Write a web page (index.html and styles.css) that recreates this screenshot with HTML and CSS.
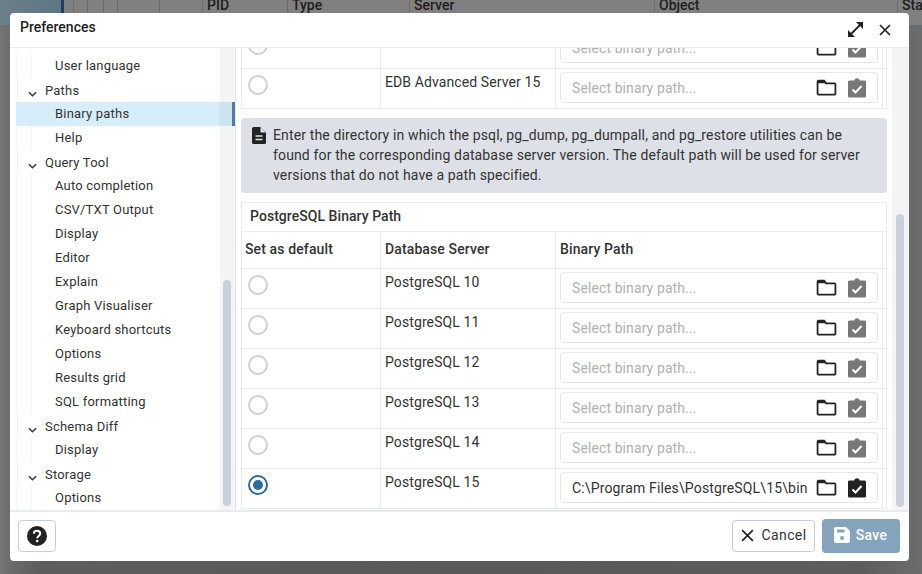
FILE: index.html
```html
<!DOCTYPE html>
<html lang="en">
<head>
<meta charset="utf-8">
<title>Preferences</title>
<link rel="stylesheet" href="styles.css">
</head>
<body>
<div class="backdrop">
  <div class="bg-side"></div>
  <div class="bg-head">
    <div class="bg-col w1"></div><div class="bg-col w2"></div><div class="bg-col w3"></div><div class="bg-col w4"></div><div class="bg-col w4b"></div><div class="bg-col w4c"></div>
    <div class="bg-col w5">PID</div><div class="bg-col w6">Type</div><div class="bg-col w7">Server</div><div class="bg-col w8">Object</div><div class="bg-col w9">Sta</div>
  </div>
</div>
<div class="dialog">
  <header class="dlg-head">
    <span class="dlg-title">Preferences</span>
    <span class="dlg-tools">
      <svg class="ico-expand" viewBox="0 0 15 15"><path d="M3 12 12 3" fill="none" stroke="#222" stroke-width="1.800"/><path d="M8 0H15V7L12.500 4.500 11 3 9.500 1.500Z M0 8V15H7L4.500 12.500 3 11 1.500 9.500Z" fill="#222"/></svg>
      <svg class="ico-close" viewBox="0 0 14 14"><path d="M2 2 12 12M12 2 2 12" fill="none" stroke="#222" stroke-width="1.700"/></svg>
    </span>
  </header>
  <div class="dlg-body">
    <nav class="tree">
      <div class="tree-list">
        <div class="leaf">User language</div>
        <div class="branch"><svg class="chev" viewBox="0 0 10 6"><path d="M1 1 5 5 9 1" fill="none" stroke="#333" stroke-width="1.600"/></svg>Paths</div>
        <div class="leaf selected">Binary paths</div>
        <div class="leaf">Help</div>
        <div class="branch"><svg class="chev" viewBox="0 0 10 6"><path d="M1 1 5 5 9 1" fill="none" stroke="#333" stroke-width="1.600"/></svg>Query Tool</div>
        <div class="leaf">Auto completion</div>
        <div class="leaf">CSV/TXT Output</div>
        <div class="leaf">Display</div>
        <div class="leaf">Editor</div>
        <div class="leaf">Explain</div>
        <div class="leaf">Graph Visualiser</div>
        <div class="leaf">Keyboard shortcuts</div>
        <div class="leaf">Options</div>
        <div class="leaf">Results grid</div>
        <div class="leaf">SQL formatting</div>
        <div class="branch"><svg class="chev" viewBox="0 0 10 6"><path d="M1 1 5 5 9 1" fill="none" stroke="#333" stroke-width="1.600"/></svg>Schema Diff</div>
        <div class="leaf">Display</div>
        <div class="branch"><svg class="chev" viewBox="0 0 10 6"><path d="M1 1 5 5 9 1" fill="none" stroke="#333" stroke-width="1.600"/></svg>Storage</div>
        <div class="leaf">Options</div>
      </div>
      <div class="tree-scroll"><div class="tree-thumb"></div></div>
    </nav>
    <main class="content">
      <div class="pane">
        <div class="top-table">
          <div class="row"><div class="c1"><span class="radio"></span></div><div class="c2"></div><div class="c3"><div class="path"><span class="ph">Select binary path...</span><svg class="folder" viewBox="0 0 20 16"><path d="M1.500 2.500V14a.8.8 0 0 0 .8.8h15.400a.8.8 0 0 0 .8-.8V4.800a.8.8 0 0 0-.8-.8H9.500L7.800 1.500H2.300a.8.8 0 0 0-.8 1Z" fill="none" stroke="#222" stroke-width="1.700"/><path d="M2 1.500H7.800L9.500 4H2Z" fill="#222"/></svg><svg class="clip" viewBox="0 0 18 20"><path d="M2 2.500H6.300C6.600 1 7.700.3 9 .3S11.400 1 11.700 2.500H16A1.500 1.500 0 0 1 18 4V18A1.500 1.500 0 0 1 16 19.500H2A1.500 1.500 0 0 1 0 18V4A1.500 1.500 0 0 1 2 2.500Z" fill="#777"/><path d="M4.500 11.500 7.500 14.500 13.500 8" fill="none" stroke="#fff" stroke-width="2"/></svg></div></div></div>
          <div class="row"><div class="c1"><span class="radio"></span></div><div class="c2">EDB Advanced Server 15</div><div class="c3"><div class="path"><span class="ph">Select binary path...</span><svg class="folder" viewBox="0 0 20 16"><path d="M1.500 2.500V14a.8.8 0 0 0 .8.8h15.400a.8.8 0 0 0 .8-.8V4.800a.8.8 0 0 0-.8-.8H9.500L7.800 1.500H2.300a.8.8 0 0 0-.8 1Z" fill="none" stroke="#222" stroke-width="1.700"/><path d="M2 1.500H7.800L9.500 4H2Z" fill="#222"/></svg><svg class="clip" viewBox="0 0 18 20"><path d="M2 2.500H6.300C6.600 1 7.700.3 9 .3S11.400 1 11.700 2.500H16A1.500 1.500 0 0 1 18 4V18A1.500 1.500 0 0 1 16 19.500H2A1.500 1.500 0 0 1 0 18V4A1.500 1.500 0 0 1 2 2.500Z" fill="#777"/><path d="M4.500 11.500 7.500 14.500 13.500 8" fill="none" stroke="#fff" stroke-width="2"/></svg></div></div></div>
        </div>
        <div class="note">
          <svg class="note-ico" viewBox="0 0 14 17"><path d="M1.500 0H8.500L14 5.500V15.500A1.500 1.500 0 0 1 12.500 17H1.500A1.500 1.500 0 0 1 0 15.500V1.500A1.500 1.500 0 0 1 1.500 0Z" fill="#222"/><path d="M8.500 0V5.500H14" fill="#dde0e7"/><path d="M3.500 9H10.500M3.500 12.500H10.500" stroke="#dde0e7" stroke-width="1.500"/></svg>
          <p>Enter the directory in which the psql, pg_dump, pg_dumpall, and pg_restore utilities can be found for the corresponding database server version. The default path will be used for server versions that do not have a path specified.</p>
        </div>
        <section class="box">
          <div class="box-title">PostgreSQL Binary Path</div>
          <div class="row head"><div class="c1">Set as default</div><div class="c2">Database Server</div><div class="c3">Binary Path</div></div>
          <div class="row"><div class="c1"><span class="radio"></span></div><div class="c2">PostgreSQL 10</div><div class="c3"><div class="path"><span class="ph">Select binary path...</span><svg class="folder" viewBox="0 0 20 16"><path d="M1.500 2.500V14a.8.8 0 0 0 .8.8h15.400a.8.8 0 0 0 .8-.8V4.800a.8.8 0 0 0-.8-.8H9.500L7.800 1.500H2.300a.8.8 0 0 0-.8 1Z" fill="none" stroke="#222" stroke-width="1.700"/><path d="M2 1.500H7.800L9.500 4H2Z" fill="#222"/></svg><svg class="clip" viewBox="0 0 18 20"><path d="M2 2.500H6.300C6.600 1 7.700.3 9 .3S11.400 1 11.700 2.500H16A1.500 1.500 0 0 1 18 4V18A1.500 1.500 0 0 1 16 19.500H2A1.500 1.500 0 0 1 0 18V4A1.500 1.500 0 0 1 2 2.500Z" fill="#777"/><path d="M4.500 11.500 7.500 14.500 13.500 8" fill="none" stroke="#fff" stroke-width="2"/></svg></div></div></div>
          <div class="row"><div class="c1"><span class="radio"></span></div><div class="c2">PostgreSQL 11</div><div class="c3"><div class="path"><span class="ph">Select binary path...</span><svg class="folder" viewBox="0 0 20 16"><path d="M1.500 2.500V14a.8.8 0 0 0 .8.8h15.400a.8.8 0 0 0 .8-.8V4.800a.8.8 0 0 0-.8-.8H9.500L7.800 1.500H2.300a.8.8 0 0 0-.8 1Z" fill="none" stroke="#222" stroke-width="1.700"/><path d="M2 1.500H7.800L9.500 4H2Z" fill="#222"/></svg><svg class="clip" viewBox="0 0 18 20"><path d="M2 2.500H6.300C6.600 1 7.700.3 9 .3S11.400 1 11.700 2.500H16A1.500 1.500 0 0 1 18 4V18A1.500 1.500 0 0 1 16 19.500H2A1.500 1.500 0 0 1 0 18V4A1.500 1.500 0 0 1 2 2.500Z" fill="#777"/><path d="M4.500 11.500 7.500 14.500 13.500 8" fill="none" stroke="#fff" stroke-width="2"/></svg></div></div></div>
          <div class="row"><div class="c1"><span class="radio"></span></div><div class="c2">PostgreSQL 12</div><div class="c3"><div class="path"><span class="ph">Select binary path...</span><svg class="folder" viewBox="0 0 20 16"><path d="M1.500 2.500V14a.8.8 0 0 0 .8.8h15.400a.8.8 0 0 0 .8-.8V4.800a.8.8 0 0 0-.8-.8H9.500L7.800 1.500H2.300a.8.8 0 0 0-.8 1Z" fill="none" stroke="#222" stroke-width="1.700"/><path d="M2 1.500H7.800L9.500 4H2Z" fill="#222"/></svg><svg class="clip" viewBox="0 0 18 20"><path d="M2 2.500H6.300C6.600 1 7.700.3 9 .3S11.400 1 11.700 2.500H16A1.500 1.500 0 0 1 18 4V18A1.500 1.500 0 0 1 16 19.500H2A1.500 1.500 0 0 1 0 18V4A1.500 1.500 0 0 1 2 2.500Z" fill="#777"/><path d="M4.500 11.500 7.500 14.500 13.500 8" fill="none" stroke="#fff" stroke-width="2"/></svg></div></div></div>
          <div class="row"><div class="c1"><span class="radio"></span></div><div class="c2">PostgreSQL 13</div><div class="c3"><div class="path"><span class="ph">Select binary path...</span><svg class="folder" viewBox="0 0 20 16"><path d="M1.500 2.500V14a.8.8 0 0 0 .8.8h15.400a.8.8 0 0 0 .8-.8V4.800a.8.8 0 0 0-.8-.8H9.500L7.800 1.500H2.300a.8.8 0 0 0-.8 1Z" fill="none" stroke="#222" stroke-width="1.700"/><path d="M2 1.500H7.800L9.500 4H2Z" fill="#222"/></svg><svg class="clip" viewBox="0 0 18 20"><path d="M2 2.500H6.300C6.600 1 7.700.3 9 .3S11.400 1 11.700 2.500H16A1.500 1.500 0 0 1 18 4V18A1.500 1.500 0 0 1 16 19.500H2A1.500 1.500 0 0 1 0 18V4A1.500 1.500 0 0 1 2 2.500Z" fill="#777"/><path d="M4.500 11.500 7.500 14.500 13.500 8" fill="none" stroke="#fff" stroke-width="2"/></svg></div></div></div>
          <div class="row"><div class="c1"><span class="radio"></span></div><div class="c2">PostgreSQL 14</div><div class="c3"><div class="path"><span class="ph">Select binary path...</span><svg class="folder" viewBox="0 0 20 16"><path d="M1.500 2.500V14a.8.8 0 0 0 .8.8h15.400a.8.8 0 0 0 .8-.8V4.800a.8.8 0 0 0-.8-.8H9.500L7.800 1.500H2.300a.8.8 0 0 0-.8 1Z" fill="none" stroke="#222" stroke-width="1.700"/><path d="M2 1.500H7.800L9.500 4H2Z" fill="#222"/></svg><svg class="clip" viewBox="0 0 18 20"><path d="M2 2.500H6.300C6.600 1 7.700.3 9 .3S11.400 1 11.700 2.500H16A1.500 1.500 0 0 1 18 4V18A1.500 1.500 0 0 1 16 19.500H2A1.500 1.500 0 0 1 0 18V4A1.500 1.500 0 0 1 2 2.500Z" fill="#777"/><path d="M4.500 11.500 7.500 14.500 13.500 8" fill="none" stroke="#fff" stroke-width="2"/></svg></div></div></div>
          <div class="row"><div class="c1"><span class="radio on"></span></div><div class="c2">PostgreSQL 15</div><div class="c3"><div class="path"><span class="val">C:\Program Files\PostgreSQL\15\bin</span><svg class="folder" viewBox="0 0 20 16"><path d="M1.500 2.500V14a.8.8 0 0 0 .8.8h15.400a.8.8 0 0 0 .8-.8V4.800a.8.8 0 0 0-.8-.8H9.500L7.800 1.500H2.300a.8.8 0 0 0-.8 1Z" fill="none" stroke="#222" stroke-width="1.700"/><path d="M2 1.500H7.800L9.500 4H2Z" fill="#222"/></svg><svg class="clip" viewBox="0 0 18 20"><path d="M2 2.500H6.300C6.600 1 7.700.3 9 .3S11.400 1 11.700 2.500H16A1.500 1.500 0 0 1 18 4V18A1.500 1.500 0 0 1 16 19.500H2A1.500 1.500 0 0 1 0 18V4A1.500 1.500 0 0 1 2 2.500Z" fill="#222"/><path d="M4.500 11.500 7.500 14.500 13.500 8" fill="none" stroke="#fff" stroke-width="2"/></svg></div></div></div>
        </section>
      </div>
      <div class="pane-scroll"><div class="pane-thumb"></div></div>
    </main>
  </div>
  <footer class="dlg-foot">
    <button class="btn help"><svg class="ico-help" viewBox="0 0 20 20"><circle cx="10" cy="10" r="10" fill="#222"/><path d="M6.800 7.600C6.900 5.700 8.300 4.700 10 4.700c1.900 0 3.200 1.100 3.200 2.700 0 2.600-3 2.500-3 4.900" fill="none" stroke="#fff" stroke-width="2"/><circle cx="10.200" cy="15" r="1.300" fill="#fff"/></svg></button>
    <div class="foot-actions">
      <button class="btn cancel"><svg class="ico-x" viewBox="0 0 14 14"><path d="M2 2 12 12M12 2 2 12" fill="none" stroke="#222" stroke-width="1.600"/></svg>Cancel</button>
      <button class="btn save"><svg class="ico-save" viewBox="0 0 16 16"><path d="M2 0H12L16 4V14A2 2 0 0 1 14 16H2A2 2 0 0 1 0 14V2A2 2 0 0 1 2 0Z" fill="#fff"/><path d="M3 2.500H10.500V5.500H3Z" fill="#84a4be"/><circle cx="8" cy="11" r="2" fill="#84a4be"/></svg>Save</button>
    </div>
  </footer>
</div>
</body>
</html>
```

FILE: styles.css
```css
* { box-sizing: border-box; }
html, body { margin: 0; height: 100%; }
body {
  width: 922px;
  height: 574px;
  overflow: hidden;
  position: relative;
  background: #5a5b5d;
  font-family: Roboto, "Liberation Sans", sans-serif;
  font-size: 14px;
  color: #222;
}
.backdrop { display: flex; height: 574px; background: linear-gradient(90deg, #757575 0, #6a6a6b 12px, #5c5d5f 40px, #58595b 500px, #5c5d5f 860px, #6c6d6f 922px); }
.bg-side { width: 64px; height: 25px; border-right: 3px solid #1f3f5e; background: linear-gradient(90deg, #6c7f88 0, #5e7784 60px); flex: none; }
.bg-head { flex: 1; display: flex; height: 25px; background: #808080; }
.bg-col { height: 25px; border-right: 1px solid #6c6c6c; font-size: 14px; font-weight: 500; color: #1e1e1e; line-height: 10px; padding-left: 4px; flex: none; }
.w1 { width: 10px; } .w2 { width: 14px; } .w3 { width: 16px; } .w4 { width: 14px; } .w4b { width: 42px; } .w4c { width: 43px; }
.w5 { width: 85px; } .w6 { width: 122px; } .w7 { width: 245px; } .w8 { width: 243px; } .w9 { flex: 1; border: 0; }

.dialog {
  position: absolute;
  left: 10px; top: 13px;
  width: 899px; height: 548px;
  background: #fff;
  border-radius: 4px;
  display: flex;
  flex-direction: column;
  overflow: hidden;
}
.dlg-head {
  height: 35px;
  flex: none;
  display: flex;
  align-items: center;
  justify-content: space-between;
  padding: 0 17px 1px 10px;
  border-bottom: 1px solid #e9ebef;
}
.dlg-title { font-size: 14px; font-weight: 500; color: #222; position: relative; top: -3px; }
.dlg-tools { display: flex; align-items: center; gap: 15px; }
.ico-expand { width: 15px; height: 15px; display: block; }
.ico-close { width: 14px; height: 14px; display: block; }

.dlg-body { flex: 1; min-height: 0; display: flex; }
.tree { width: 226px; flex: none; display: flex; border-right: 1px solid #e3e5ea; overflow: hidden; }
.tree-list { width: 210px; flex: none; padding-top: 6px; }
.tree-scroll { flex: 1; background: #f3f4f6; padding: 232px 4px 4px 3px; }
.tree-thumb { width: 8px; height: 226px; background: #c9d0da; border-radius: 4px; }
.leaf, .branch { color: #333; font-size: 13px; letter-spacing: .2px; white-space: nowrap; }
.leaf { height: 24px; line-height: 23px; padding-left: 45px; background: linear-gradient(90deg, transparent 0, transparent 6px, #f1f2f4 6px, #f1f2f4 7px, transparent 7px, transparent 21px, #f1f2f4 21px, #f1f2f4 22px, transparent 22px); }
.branch { height: 24px; line-height: 24px; padding: 1px 0 0 35px; position: relative; background: linear-gradient(90deg, transparent 0, transparent 7px, #f1f2f4 7px, #f1f2f4 8px, transparent 8px); }
.chev { position: absolute; left: 18px; top: 13px; width: 9px; height: 6px; }
.leaf.selected {
  position: relative;
  z-index: 2;
  width: 219px;
  margin-left: 6px;
  padding-left: 39px;
  background: linear-gradient(90deg, #d6eefb 0, #d6eefb 203px, #cde3ef 203px);
  border-right: 3px solid #4f7ba6;
}

.content { flex: 1; min-width: 0; display: flex; overflow: hidden; }
.pane { width: 656px; flex: none; padding: 0 5px; overflow: hidden; }
.top-table { margin-top: -20px; margin-bottom: 9px; border: 1px solid #e9ebef; border-top: 0; }
.row { display: flex; height: 40px; border-top: 1px solid #e9ebef; }
.c1 { width: 139px; flex: none; padding: 6px 0 0 6px; border-right: 1px solid #e9ebef; }
.c2 { width: 175px; flex: none; padding: 5px 4px 0 4px; border-right: 1px solid #e9ebef; color: #333; font-size: 14px; letter-spacing: .1px; line-height: 17px; }
.c3 { width: 327px; flex: none; padding: 3px 4px 0 4px; border-right: 1px solid #e9ebef; }
.radio { display: block; width: 20px; height: 20px; border: 2px solid #d0d0d0; border-radius: 50%; background: #fff; }
.radio.on { border-color: #2e6a9a; position: relative; }
.radio.on::after { content: ""; position: absolute; left: 3px; top: 3px; width: 10px; height: 10px; background: #2e6a9a; border-radius: 50%; }
.path { height: 31px; border: 1px solid #e4e6ea; border-radius: 4px; display: flex; align-items: center; padding: 0 11px; background: #fff; }
.ph, .val { flex: 1; min-width: 0; font-size: 14px; letter-spacing: .1px; white-space: nowrap; overflow: hidden; }
.ph { color: #b0b0b0; }
.val { color: #333; letter-spacing: .15px; }
.folder { width: 21px; height: 17px; display: block; margin-right: 11px; flex: none; }
.clip { width: 18px; height: 20px; display: block; flex: none; }

.note { height: 75px; background: #dde0e7; border-radius: 4px; display: flex; padding: 7px 10px 0 11px; margin-bottom: 9px; }
.note-ico { width: 14px; height: 17px; flex: none; margin: 2px 7px 0 0; display: block; }
.note p { margin: 0; color: #333; font-size: 14px; line-height: 20px; letter-spacing: .14px; }

.box { border: 1px solid #e9ebef; }
.box-title { height: 28px; line-height: 27px; padding-left: 8px; font-weight: 500; font-size: 14px; color: #333; letter-spacing: .05px; }
.row.head { height: 37px; font-weight: 500; line-height: 34px; }
.row.head .c1, .row.head .c2, .row.head .c3 { padding-top: 0; line-height: 34px; color: #333; letter-spacing: .12px; }
.row.head .c1 { padding-left: 3px; }

.pane-scroll { flex: 1; background: #f3f4f6; padding: 166px 5px 0 4px; }
.pane-thumb { width: 8px; height: 293px; background: #c9d0da; border-radius: 4px; }

.dlg-foot { height: 51px; flex: none; border-top: 2px solid #e9ebef; display: flex; align-items: center; justify-content: space-between; padding: 0 9px 2px 8px; }
.foot-actions { display: flex; gap: 7px; align-items: center; }
.btn { font-family: inherit; font-size: 14px; border-radius: 4px; display: flex; align-items: center; justify-content: center; padding: 0; cursor: pointer; }
.help { width: 38px; height: 32px; background: #fff; border: 1px solid #c5cfdc; }
.ico-help { width: 20px; height: 20px; display: block; }
.cancel { width: 83px; height: 32px; background: #fff; border: 1px solid #c5cfdc; color: #333; letter-spacing: .4px; gap: 6px; padding-bottom: 1px; }
.ico-x { width: 15px; height: 15px; display: block; }
.save { width: 78px; height: 34px; background: #84a4be; border: 0; color: #fff; font-weight: 500; letter-spacing: .35px; gap: 6px; padding: 0 1px 2px 0; }
.ico-save { width: 16px; height: 16px; display: block; }
```
